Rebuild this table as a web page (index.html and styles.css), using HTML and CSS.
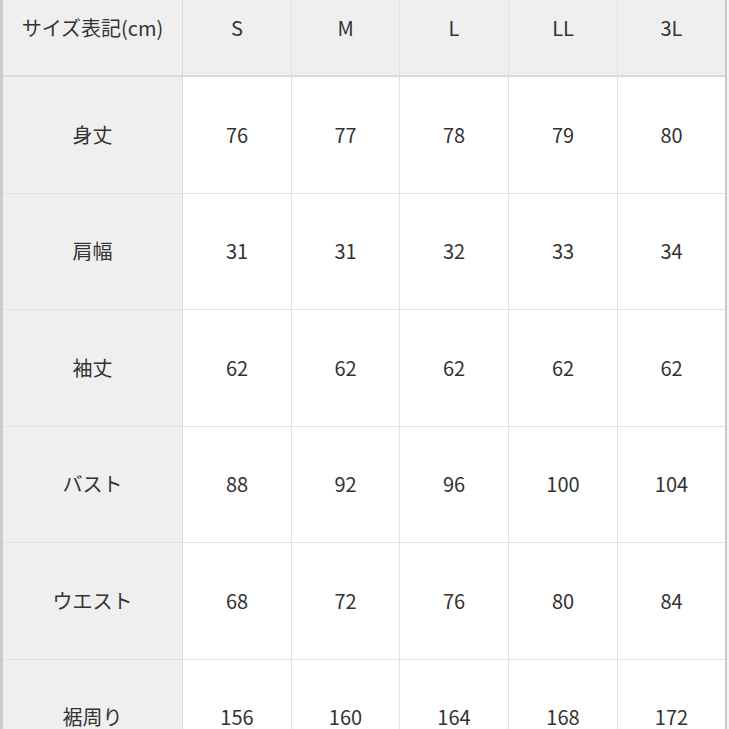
FILE: index.html
```html
<!DOCTYPE html>
<html lang="ja">
<head>
<meta charset="utf-8">
<title>サイズ表</title>
<link rel="stylesheet" href="styles.css">
</head>
<body>
<div class="frame">
  <div class="chart">
    <div class="cell head label">サイズ表記(cm)</div>
    <div class="cell head">S</div>
    <div class="cell head">M</div>
    <div class="cell head">L</div>
    <div class="cell head">LL</div>
    <div class="cell head last">3L</div>

    <div class="cell label">身丈</div>
    <div class="cell">76</div><div class="cell">77</div><div class="cell">78</div><div class="cell">79</div><div class="cell last">80</div>

    <div class="cell label">肩幅</div>
    <div class="cell">31</div><div class="cell">31</div><div class="cell">32</div><div class="cell">33</div><div class="cell last">34</div>

    <div class="cell label">袖丈</div>
    <div class="cell">62</div><div class="cell">62</div><div class="cell">62</div><div class="cell">62</div><div class="cell last">62</div>

    <div class="cell label">バスト</div>
    <div class="cell">88</div><div class="cell">92</div><div class="cell">96</div><div class="cell">100</div><div class="cell last">104</div>

    <div class="cell label">ウエスト</div>
    <div class="cell">68</div><div class="cell">72</div><div class="cell">76</div><div class="cell">80</div><div class="cell last">84</div>

    <div class="cell foot label">裾周り</div>
    <div class="cell foot">156</div><div class="cell foot">160</div><div class="cell foot">164</div><div class="cell foot">168</div><div class="cell foot last">172</div>
  </div>
</div>
</body>
</html>
```
FILE: styles.css
```css
html, body {
  margin: 0;
  padding: 0;
  background: #f4f4f4;
  overflow: hidden;
}
body {
  width: 729px;
  height: 729px;
  font-family: "Noto Sans CJK JP", "Noto Sans", sans-serif;
  color: #333;
}
.frame {
  width: 722px;
  height: 729px;
  overflow: hidden;
  border-left: 3px solid #cbcbcb;
  border-right: 2px solid #c9c9c9;
  background: #fff;
}
.chart {
  display: grid;
  grid-template-columns: 180px 109px 108px 109px 109px 107px;
  grid-template-rows: 77px repeat(5, 116.5px) 69.5px;
}
.cell {
  box-sizing: border-box;
  border-right: 1px solid #e2e2e2;
  border-bottom: 1px solid #e2e2e2;
  display: flex;
  align-items: center;
  justify-content: center;
  font-size: 20px;
  line-height: 20px;
  background: #fff;
}
.cell.last {
  border-right: none;
}
.label {
  background: #efefef;
  border-right-color: #d9d9d9;
}
.head {
  background: #efefef;
  align-items: flex-start;
  padding-top: 18px;
  border-bottom: 2px solid #dadada;
}
.foot {
  align-items: flex-start;
  padding-top: 47px;
  border-bottom: none;
}
```
